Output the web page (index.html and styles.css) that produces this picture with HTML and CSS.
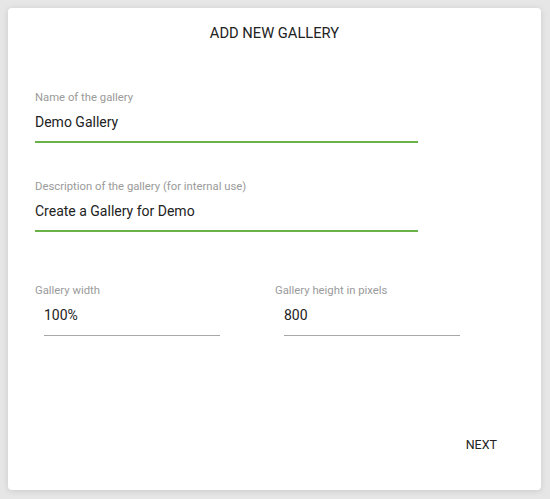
FILE: index.html
```html
<!DOCTYPE html>
<html>
<head>
<meta charset="utf-8">
<link rel="stylesheet" href="styles.css">
</head>
<body>
<div class="card">
  <div class="title">ADD NEW GALLERY</div>
  <div class="form">
    <div class="field wide">
      <div class="label">Name of the gallery</div>
      <div class="value active">Demo Gallery</div>
    </div>
    <div class="field wide second">
      <div class="label">Description of the gallery (for internal use)</div>
      <div class="value active">Create a Gallery for Demo</div>
    </div>
    <div class="row">
      <div class="field">
        <div class="label">Gallery width</div>
        <div class="value small">100%</div>
      </div>
      <div class="field">
        <div class="label">Gallery height in pixels</div>
        <div class="value small">800</div>
      </div>
    </div>
  </div>
  <div class="footer">
    <div class="next">NEXT</div>
  </div>
</div>
</body>
</html>
```
FILE: styles.css
```css
html, body {
  margin: 0;
  padding: 0;
}
body {
  background: #e6e6e6;
  font-family: Roboto, "Liberation Sans", Arial, sans-serif;
  width: 550px;
  height: 499px;
  overflow: hidden;
  padding: 8px;
  box-sizing: border-box;
}
.card {
  width: 533px;
  height: 482px;
  background: #fff;
  border-radius: 4px;
  box-shadow: 0 1px 6px rgba(0, 0, 0, 0.12);
  box-sizing: border-box;
  padding: 15px 0 37px 0;
  display: flex;
  flex-direction: column;
}
.title {
  text-align: center;
  font-size: 14.7px;
  line-height: 20px;
  color: #222;
}
.form {
  margin-top: 48px;
  padding-left: 27px;
}
.field .label {
  font-size: 11.3px;
  line-height: 14px;
  color: #9a9a9a;
}
.field .value {
  margin-top: 7px;
  font-size: 14px;
  line-height: 20px;
  color: #222;
}
.field .value.active {
  width: 383px;
  padding-bottom: 9px;
  border-bottom: 2px solid #69b24a;
}
.field.second {
  margin-top: 37px;
}
.row {
  margin-top: 52px;
  display: grid;
  grid-template-columns: 240px 240px;
}
.field .value.small {
  margin-left: 9px;
  width: 176px;
  padding-bottom: 10px;
  border-bottom: 1px solid #a8a8a8;
}
.footer {
  margin-top: auto;
  display: flex;
  justify-content: flex-end;
  padding-right: 44px;
}
.next {
  font-size: 12.5px;
  line-height: 16px;
  color: #222;
}
```
